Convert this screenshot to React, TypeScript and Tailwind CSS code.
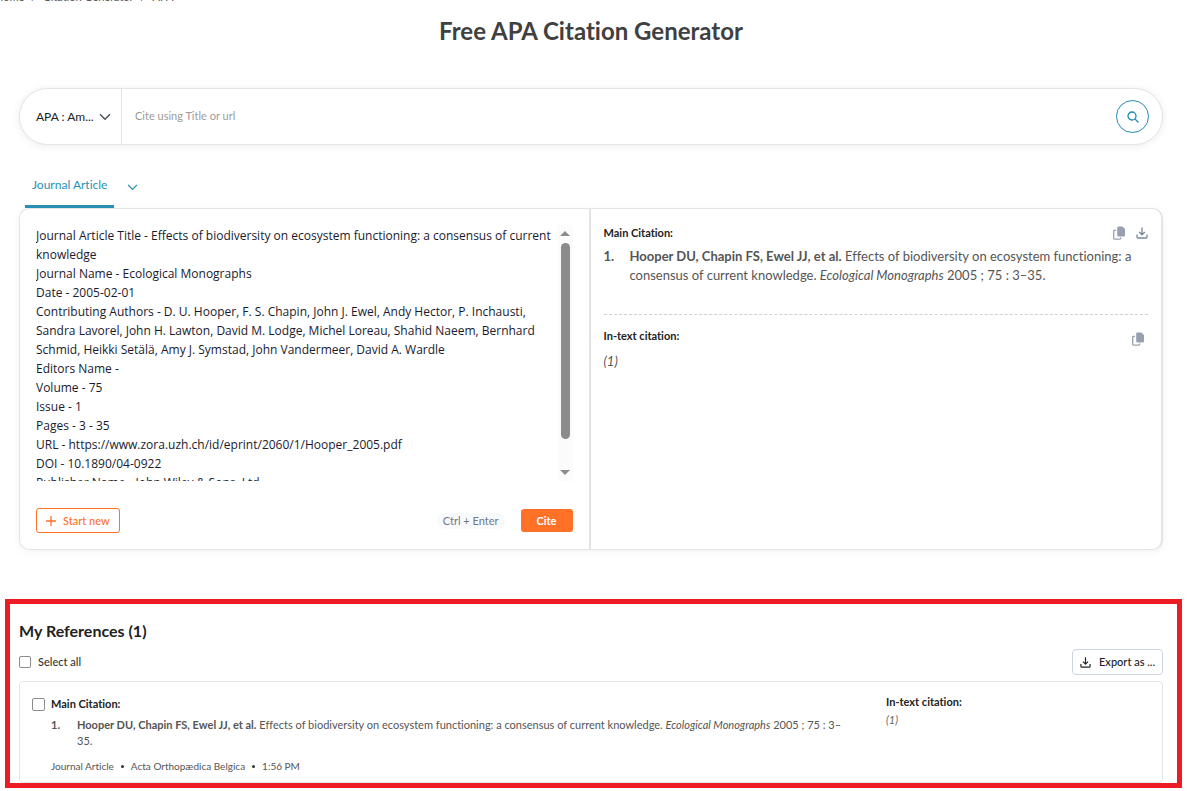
import { ReactNode } from "react";

const SOURCE_FIELDS = [
  "Journal Article Title - Effects of biodiversity on ecosystem functioning: a consensus of current knowledge",
  "Journal Name - Ecological Monographs",
  "Date - 2005-02-01",
  "Contributing Authors - D. U. Hooper, F. S. Chapin, John J. Ewel, Andy Hector, P. Inchausti, Sandra Lavorel, John H. Lawton, David M. Lodge, Michel Loreau, Shahid Naeem, Bernhard Schmid, Heikki Setälä, Amy J. Symstad, John Vandermeer, David A. Wardle",
  "Editors Name -",
  "Volume - 75",
  "Issue - 1",
  "Pages - 3 - 35",
  "URL - https://www.zora.uzh.ch/id/eprint/2060/1/Hooper_2005.pdf",
  "DOI - 10.1890/04-0922",
  "Publisher Name - John Wiley & Sons, Ltd",
].join("\n");

function ChevronDown({ className }: { className: string }) {
  return (
    <svg viewBox="0 0 12 8" fill="none" stroke="currentColor" strokeWidth="1.4" className={className} aria-hidden="true">
      <path d="M1 1.2l5 5 5-5" />
    </svg>
  );
}

function CopyIcon() {
  return (
    <svg viewBox="0 0 12 14" className="h-3.5 w-3 text-[#98a0b0]" aria-hidden="true">
      <path d="M5.500 0.500h3.900L12 3v6.200a1.300 1.300 0 0 1-1.300 1.300H5.500a1.300 1.300 0 0 1-1.300-1.300V1.800a1.300 1.300 0 0 1 1.300-1.300z" fill="currentColor" />
      <path d="M3 4.300H1.500a.8.8 0 0 0-.8.8v7.200a.8.8 0 0 0 .8.8h5.400a.8.8 0 0 0 .8-.8v-.9" fill="none" stroke="currentColor" strokeWidth="1.300" />
    </svg>
  );
}

function DownloadIcon({ className }: { className: string }) {
  return (
    <svg viewBox="0 0 12 12" fill="none" stroke="currentColor" strokeWidth="1.300" strokeLinejoin="round" className={className} aria-hidden="true">
      <path d="M6 0.4v7M3.200 5L6 7.700 8.800 5M1 7.600v2.400a1 1 0 0 0 1 1h8a1 1 0 0 0 1-1V7.600" />
    </svg>
  );
}

function IconButton({ label, children }: { label: string; children: ReactNode }) {
  return (
    <button type="button" aria-label={label} className="flex">
      {children}
    </button>
  );
}

function CitationText() {
  return (
    <>
      <b>Hooper DU, Chapin FS, Ewel JJ, et al.</b> Effects of biodiversity on ecosystem functioning: a consensus of
      current knowledge. <i>Ecological Monographs</i> 2005 ; 75 : 3–35.
    </>
  );
}

function SearchBar() {
  return (
    <form className="flex h-[57px] items-stretch rounded-full border border-[#e4e4e4] bg-white shadow-[0_1px_8px_rgba(0,0,0,0.08)]">
      <button type="button" className="flex w-[102px] items-center justify-between border-r border-[#e4e4e4] pr-2.5 pl-4 text-xs text-[#222]">
        APA : Am...
        <ChevronDown className="h-2 w-3 text-[#444f58]" />
      </button>
      <input
        type="text"
        aria-label="Cite using Title or url"
        placeholder="Cite using Title or url"
        className="min-w-0 flex-1 bg-transparent px-[13px] text-[11px] outline-none placeholder:text-[#9b9b9b]"
      />
      <button type="submit" aria-label="Search" className="mr-[13px] flex size-[33px] items-center justify-center self-center rounded-full border border-[#1f8ab4] text-[#1f8ab4]">
        <svg viewBox="0 0 12 12" className="size-3" fill="none" stroke="currentColor" strokeWidth="1.3" aria-hidden="true">
          <circle cx="5" cy="5" r="4" />
          <path d="M8 8l3.500 3.500" />
        </svg>
      </button>
    </form>
  );
}

function SourcePanel() {
  return (
    <div className="flex flex-col border-r-2 border-[#e4e4e4] p-4">
      <div className="flex h-64">
        <textarea
          aria-label="Journal article details"
          readOnly
          value={SOURCE_FIELDS}
          className="min-w-0 flex-1 resize-none overflow-hidden pt-px font-['Open_Sans',sans-serif] text-xs leading-[19px] text-[#1a1a2e] outline-none"
        />
        <div className="flex w-[15px] flex-col items-center bg-[#fbfbfb] py-1.5 text-[#8b8b8b]" aria-hidden="true">
          <svg viewBox="0 0 10 5" className="h-[5px] w-2.5" fill="currentColor">
            <path d="M0 5l5-5 5 5z" />
          </svg>
          <div className="mt-[7px] h-[196px] w-[9px] rounded-full bg-current" />
          <svg viewBox="0 0 10 5" className="mt-auto h-[5px] w-2.5" fill="currentColor">
            <path d="M0 0l5 5 5-5z" />
          </svg>
        </div>
      </div>
      <div className="mt-[27px] flex items-center">
        <button type="button" className="flex h-[25px] items-center gap-[7px] rounded-[3px] border border-[#ff7127] px-[9px] text-[11px] leading-4 font-medium text-[#ff7127]">
          <svg viewBox="0 0 10 10" className="size-2.5" fill="none" stroke="currentColor" strokeWidth="1.3" aria-hidden="true">
            <path d="M5 0v10M0 5h10" />
          </svg>
          Start new
        </button>
        <span className="ml-auto rounded-full bg-[#f8f9fb] px-1.5 text-[11px] leading-4 text-[#6f7887]">Ctrl + Enter</span>
        <button type="button" className="ml-4 h-[23px] w-[52px] rounded-[3px] bg-[#ff7127] text-[11px] leading-4 font-bold text-white">
          Cite
        </button>
      </div>
    </div>
  );
}

function ResultPanel() {
  return (
    <div className="px-[13px] pt-4">
      <div className="flex items-center justify-between">
        <h2 className="text-[11px] leading-4 font-bold text-[#222]">Main Citation:</h2>
        <div className="flex items-center gap-[11px]">
          <IconButton label="Copy main citation">
            <CopyIcon />
          </IconButton>
          <IconButton label="Download main citation">
            <DownloadIcon className="size-3 text-[#7a869c]" />
          </IconButton>
        </div>
      </div>
      <div className="mt-1.5 flex text-[13px] leading-[19px] text-[#555]">
        <b className="w-[26px] shrink-0">1.</b>
        <p>
          <CitationText />
        </p>
      </div>
      <div className="mt-[29px] border-t border-dashed border-[#d0d0d0]" />
      <div className="mt-[13px] flex items-start justify-between">
        <h2 className="text-[11px] leading-4 font-bold text-[#222]">In-text citation:</h2>
        <div className="mt-1 mr-1">
          <IconButton label="Copy in-text citation">
            <CopyIcon />
          </IconButton>
        </div>
      </div>
      <p className="mt-[7px] text-[13px] leading-4 text-[#555] italic">(1)</p>
    </div>
  );
}

function ReferenceList() {
  return (
    <section className="mt-[49px] mr-[9px] ml-[5px] border-[5px] border-[#ed1c24] pt-[17px] pr-3.5 pl-[9px]">
      <h2 className="text-base leading-5 font-bold text-[#222]">My References (1)</h2>
      <div className="mt-2 flex items-center justify-between">
        <label className="flex items-center gap-[7px] text-[11px] leading-4 font-medium text-[#333]">
          <input type="checkbox" className="size-3 appearance-none rounded-[2px] border border-[#8c8c8c]" />
          Select all
        </label>
        <button type="button" className="flex h-[26px] items-center gap-2 rounded-[4px] border border-[#cbd5e1] px-[7px] text-[11px] font-medium text-[#222]">
          <DownloadIcon className="size-[11px]" />
          Export as ...
        </button>
      </div>
      <article className="mt-1.5 flex rounded-[4px] border border-[#e2e5e8] pt-3 pb-2 pl-3">
        <input type="checkbox" aria-label="Select reference" className="mt-1 size-[13px] shrink-0 appearance-none rounded-[2px] border border-[#8c8c8c]" />
        <div className="ml-1.5 w-[817px] shrink">
          <h3 className="mt-0.5 text-[11px] leading-4 font-bold text-[#222]">Main Citation:</h3>
          <div className="mt-[5px] flex pr-5 text-[11px] leading-4 text-[#555]">
            <b className="w-[26px] shrink-0">1.</b>
            <p>
              <CitationText />
            </p>
          </div>
          <ul className="mt-[9px] flex items-center gap-[7px] text-[10px] leading-4 text-[#555]">
            <li>Journal Article</li>
            <li className="size-[3px] rounded-full bg-[#333]" aria-hidden="true" />
            <li>Acta Orthopædica Belgica</li>
            <li className="size-[3px] rounded-full bg-[#333]" aria-hidden="true" />
            <li>1:56 PM</li>
          </ul>
        </div>
        <div className="ml-[18px] flex-1">
          <h3 className="text-[11px] leading-4 font-bold text-[#222]">In-text citation:</h3>
          <p className="mt-0.5 text-[11px] leading-4 text-[#666] italic">(1)</p>
        </div>
      </article>
    </section>
  );
}

export default function App() {
  return (
    <main className="bg-white font-['Lato',sans-serif] [font-variant-ligatures:none]">
      <div className="pr-7 pl-[19px]">
        <nav aria-label="Breadcrumb" className="-ml-6 flex h-[5px] items-end gap-[7px] overflow-hidden text-[11px] leading-4 text-[#555]">
          <a href="#home">Home</a>
          <span>/</span>
          <a href="#generator">Citation Generator</a>
          <span>/</span>
          <span>APA</span>
        </nav>
        <h1 className="mt-2.5 mb-[41px] text-center text-2xl font-bold text-[#404040]">Free APA Citation Generator</h1>
        <SearchBar />
        <div className="mt-8 flex items-start pl-1.5">
          <button type="button" className="h-[31px] border-b-[3px] border-[#2a8fb5] px-[7px] pb-3 text-xs text-[#2a8fb5]">
            Journal Article
          </button>
          <button type="button" aria-label="More source types" className="mt-[7px] ml-[13px] flex text-[#2a8fb5]">
            <ChevronDown className="h-[7px] w-[11px]" />
          </button>
        </div>
        <div className="grid grid-cols-2 rounded-[10px] border border-r-2 border-[#e4e4e4] bg-white shadow-[0_2px_8px_rgba(0,0,0,0.05)]">
          <SourcePanel />
          <ResultPanel />
        </div>
      </div>
      <ReferenceList />
    </main>
  );
}
